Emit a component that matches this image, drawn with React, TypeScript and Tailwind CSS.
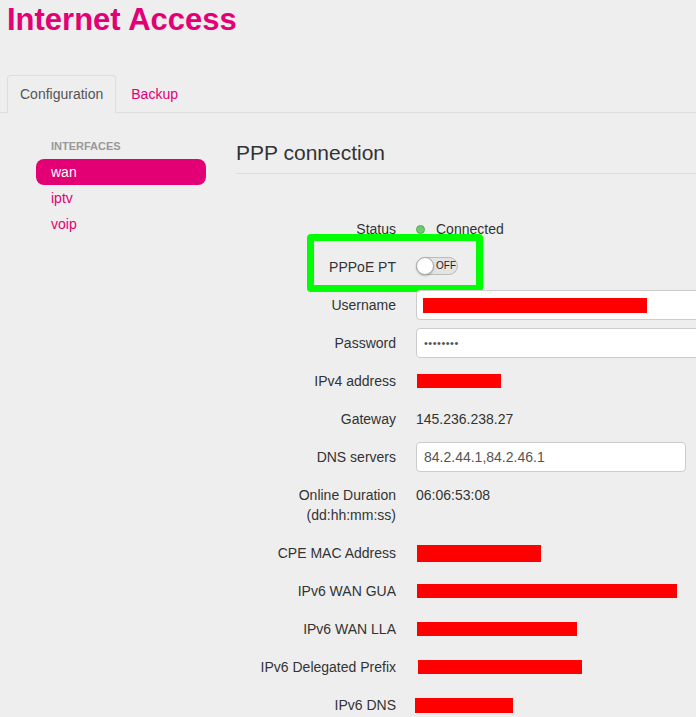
import React from "react";

const Red = ({ w, h, ml = 0 }: { w: number; h: number; ml?: number }) => (
  <div className="bg-[#ff0000]" style={{ width: w, height: h, marginLeft: ml }} />
);

function Row({
  label,
  children,
  align = "center",
  extra,
}: {
  label: React.ReactNode;
  children?: React.ReactNode;
  align?: "center" | "text" | "input";
  extra?: React.ReactNode;
}) {
  return (
    <div className="relative flex items-start">
      <div className="w-[160px] shrink-0 text-right leading-[20px] py-[9px]">{label}</div>
      {align === "center" && (
        <div className="ml-[20px] flex h-[38px] items-center">{children}</div>
      )}
      {align === "text" && (
        <div className="ml-[20px] py-[9px] leading-[20px]">{children}</div>
      )}
      {align === "input" && <div className="ml-[20px] mt-[4px]">{children}</div>}
      {extra}
    </div>
  );
}

export default function App() {
  return (
    <div className="w-[696px] h-[717px] overflow-hidden bg-[#eeeeee] font-['Liberation_Sans',Arial,sans-serif] text-[14px] text-[#333333]">
      <h1 className="pl-[7px] pt-[3px] text-[31px] leading-[34px] font-bold text-[#e20074]">Internet Access</h1>

      <div className="mt-[38px] flex border-b border-[#dddddd] pl-[7px]">
        <div className="-mb-px h-[38px] rounded-t-[4px] border border-[#dddddd] border-b-transparent bg-[#eeeeee] px-[12px] leading-[36px] text-[#555555]">
          Configuration
        </div>
        <div className="-mb-px ml-[2px] h-[38px] border border-transparent px-[12px] leading-[36px] text-[#e20074]">
          Backup
        </div>
      </div>

      <div className="flex">
        <div className="ml-[36px] mt-[26px] w-[170px] shrink-0">
          <div className="mb-[6px] pl-[15px] text-[11px] leading-[14px] font-bold text-[#999999]">INTERFACES</div>
          <div className="h-[26px] rounded-[8px] bg-[#e20074] pl-[15px] leading-[26px] text-white">wan</div>
          <div className="h-[26px] pl-[15px] leading-[26px] text-[#e20074]">iptv</div>
          <div className="h-[26px] pl-[15px] leading-[26px] text-[#e20074]">voip</div>
        </div>

        <div className="ml-[30px] flex-1">
          <h2 className="mt-[24px] border-b border-[#dddddd] pt-[1px] pb-[5px] text-[21px] leading-[30px] text-[#333333]">
            PPP connection
          </h2>

          <div className="mt-[36px]">
            <Row label="Status">
              <div className="h-[9px] w-[9px] rounded-full border border-[#4fae4f] bg-[#72c872]" />
              <span className="ml-[11px]">Connected</span>
            </Row>

            <Row
              label="PPPoE PT"
              extra={
                <div className="pointer-events-none absolute left-[71px] top-[-14px] h-[58px] w-[176px] rounded-[4px] border-[7px] border-[#00ff00]" />
              }
            >
              <div className="relative -mt-[2px] h-[18px] w-[42px] rounded-full border border-[#bbbbbb] bg-[#e4e4e4]">
                <div className="absolute left-[-1px] top-[-1px] h-[18px] w-[18px] rounded-full border border-[#aaaaaa] bg-white shadow-[0_1px_2px_rgba(0,0,0,0.25)]" />
                <span className="absolute left-[19px] top-[3px] text-[10px] leading-[10px] text-[#222222]">OFF</span>
              </div>
            </Row>

            <Row label="Username" align="input">
              <div className="flex h-[30px] w-[320px] items-center rounded-[4px] border border-[#cccccc] bg-white pl-[6px]">
                <Red w={224} h={15} />
              </div>
            </Row>

            <Row label="Password" align="input">
              <div className="flex h-[30px] w-[320px] items-center rounded-[4px] border border-[#cccccc] bg-white pl-[7px] text-[11px] tracking-[0.5px] text-[#555555]">
                ••••••••
              </div>
            </Row>

            <Row label="IPv4 address">
              <Red w={84} h={14} ml={1} />
            </Row>

            <Row label="Gateway" align="text">
              145.236.238.27
            </Row>

            <Row label="DNS servers" align="input">
              <div className="flex h-[30px] w-[270px] items-center rounded-[4px] border border-[#cccccc] bg-white pl-[7px] text-[#555555]">
                84.2.44.1,84.2.46.1
              </div>
            </Row>

            <Row
              label={
                <>
                  Online Duration
                  <br />
                  (dd:hh:mm:ss)
                </>
              }
              align="text"
            >
              06:06:53:08
            </Row>

            <Row label="CPE MAC Address">
              <Red w={124} h={17} ml={1} />
            </Row>

            <Row label="IPv6 WAN GUA">
              <Red w={260} h={14} ml={1} />
            </Row>

            <Row label="IPv6 WAN LLA">
              <Red w={160} h={14} ml={1} />
            </Row>

            <Row label="IPv6 Delegated Prefix">
              <Red w={164} h={14} ml={2} />
            </Row>

            <Row label="IPv6 DNS">
              <Red w={98} h={15} ml={-1} />
            </Row>
          </div>
        </div>
      </div>
    </div>
  );
}
